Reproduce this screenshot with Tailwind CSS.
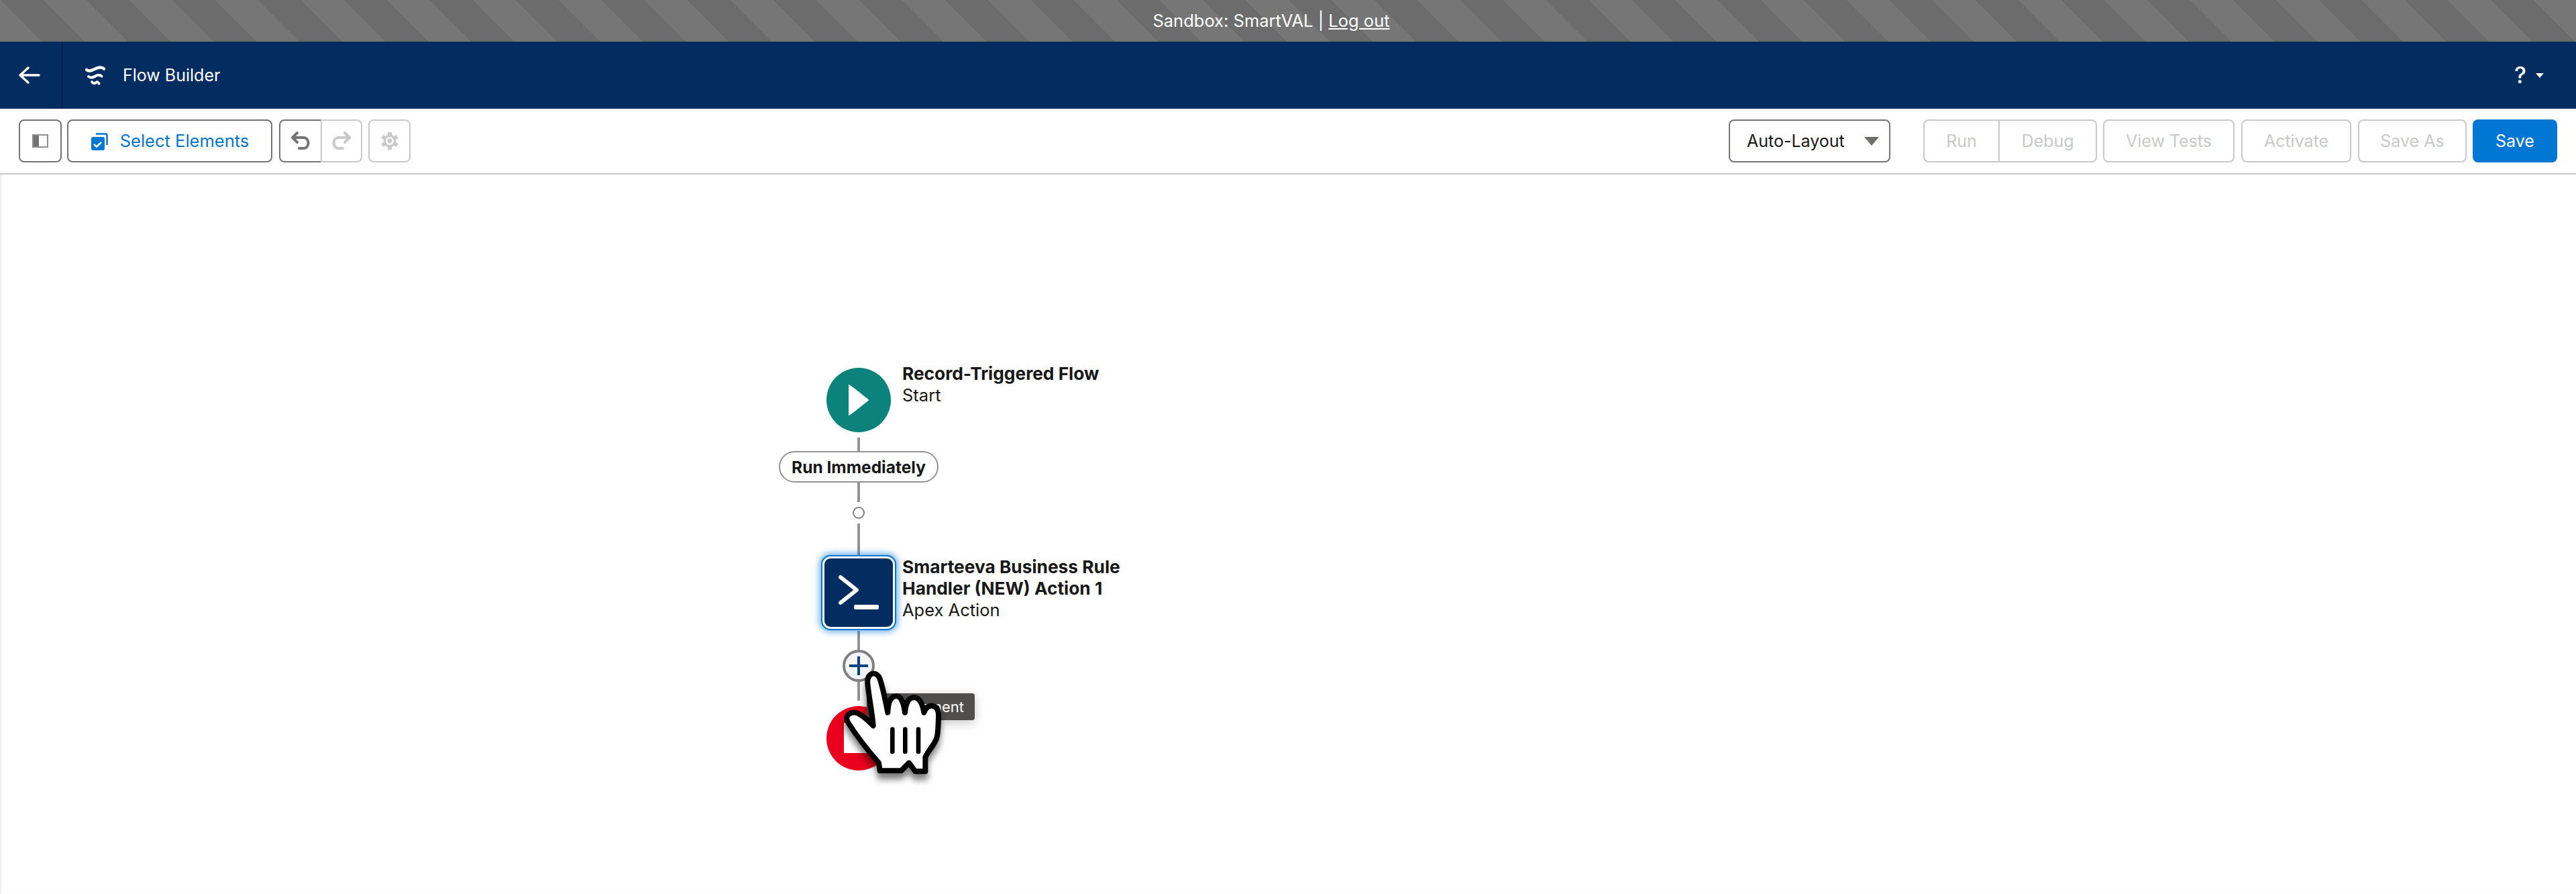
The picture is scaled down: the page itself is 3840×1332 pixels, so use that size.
<!DOCTYPE html>
<html lang="en">
<head>
  <meta charset="UTF-8" />
  <title>Flow Builder</title>
  <script src="https://cdn.jsdelivr.net/npm/@tailwindcss/browser@4"></script>
</head>
<body class="h-screen overflow-hidden flex flex-col bg-white font-[Inter,sans-serif] text-[25.500px] text-[#181818]">
  <!-- sandbox banner -->
  <div class="h-[62px] pr-[50px] flex items-center justify-center text-white text-[25.500px] bg-[linear-gradient(45deg,#6c6c6c_25%,#767676_25%,#767676_50%,#6c6c6c_50%,#6c6c6c_75%,#767676_75%)] bg-size-[128px_128px]">
    <span>Sandbox: SmartVAL |&nbsp;</span><a class="underline">Log out</a>
  </div>

  <!-- header -->
  <div class="h-[100px] flex items-center bg-[#032d60] text-white">
    <div class="w-[92px] h-full pl-[27px] flex items-center">
      <svg class="w-[34px] h-[28px]" viewBox="0 0 34 28" fill="none" stroke="white" stroke-width="3.500" stroke-linecap="round" stroke-linejoin="round"><path d="M31 14H4M15 3 3 14l12 11"/></svg>
    </div>
    <div class="w-[2px] h-full bg-[#011f45]"></div>
    <svg class="w-[30px] h-[30px] ml-[33px]" viewBox="0 0 30 30" fill="none" stroke="white" stroke-linecap="round"><path stroke-width="4.500" d="M2 7C6 10 10 8 15 5.500S24 2.500 28 5.500"/><path stroke-width="4" d="M5 17C9 20 13 18 16 16S22 14.500 24.500 16.500"/><path stroke-width="3.800" d="M10 25C12 28 14 27.500 16 26S19 25 20.500 27.500"/></svg>
    <span class="ml-[26px] mt-[2px] text-[25px]">Flow Builder</span>
    <div class="ml-auto mr-[48px] flex items-center gap-[14px]">
      <span class="text-[34px] font-medium leading-none">?</span>
      <div class="w-0 h-0 border-x-[6px] border-x-transparent border-t-[7px] border-t-white"></div>
    </div>
  </div>

  <!-- toolbar -->
  <div class="h-[98px] border-b-2 border-[#c9c9c9] px-[28px] flex items-center text-[25px]">
    <button class="w-[64px] h-[64px] flex items-center justify-center border-2 border-[#747474] rounded-lg">
      <svg class="w-[24px] h-[20px]" viewBox="0 0 24 20"><rect x="1" y="1" width="22" height="18" fill="white" stroke="#8f8f8f" stroke-width="2"/><rect x="2" y="2" width="8" height="16" fill="#747474"/></svg>
    </button>
    <button class="ml-[8px] w-[306px] h-[64px] pt-[1px] flex items-center justify-center gap-[18px] border-2 border-[#747474] rounded-lg text-[#0176d3] text-[25.500px]">
      <svg class="w-[26px] h-[26px]" viewBox="0 0 26 26"><path d="M8 1.500H22.500A2 2 0 0 1 24.500 3.500V18" fill="none" stroke="#0176d3" stroke-width="2.500"/><rect x="1" y="6" width="20" height="20" rx="3" fill="#0176d3"/><path d="M5 17l4 3.500 7-6.500" fill="none" stroke="white" stroke-width="2.500"/></svg>
      <span>Select Elements</span>
    </button>
    <div class="ml-[10px] flex">
      <button class="w-[62px] h-[64px] flex items-center justify-center border-2 border-r-0 border-[#747474] rounded-l-lg">
        <svg class="w-[30px] h-[30px]" viewBox="0 0 30 30" fill="none" stroke="#747474" stroke-width="4" stroke-linecap="round" stroke-linejoin="round"><path d="M10 3 3 10l7 7M3 10H19C29 10 29 26 19 26H13"/></svg>
      </button>
      <button class="w-[62px] h-[64px] flex items-center justify-center border-2 border-[#c9c9c9] rounded-r-lg">
        <svg class="w-[30px] h-[30px]" viewBox="0 0 30 30" fill="none" stroke="#c9c9c9" stroke-width="4" stroke-linecap="round" stroke-linejoin="round"><path d="M20 3l7 7-7 7M27 10H11C1 10 1 26 11 26H17"/></svg>
      </button>
    </div>
    <button class="ml-[9px] w-[63px] h-[64px] flex items-center justify-center border-2 border-[#c9c9c9] rounded-lg">
      <svg class="w-[28px] h-[28px]" viewBox="0 0 28 28"><g stroke="#c9c9c9" stroke-width="6"><path d="M14 1V27M2.700 7.500 25.300 20.500M2.700 20.500 25.300 7.500"/></g><circle cx="14" cy="14" r="9.500" fill="#c9c9c9"/><circle cx="14" cy="14" r="6" fill="white"/><circle cx="14" cy="14" r="3.500" fill="#c9c9c9"/></svg>
    </button>

    <button class="ml-auto w-[241px] h-[64px] pl-[25px] pr-[15px] pt-[1px] flex items-center justify-between border-2 border-[#747474] rounded-lg">
      <span>Auto-Layout</span>
      <div class="w-0 h-0 border-x-[11.500px] border-x-transparent border-t-[13px] border-t-[#706e6b]"></div>
    </button>
    <div class="ml-[49px] flex text-[#c9c9c9]">
      <button class="w-[112px] h-[64px] pt-[1px] border-2 border-r-0 border-[#c9c9c9] rounded-l-lg">Run</button>
      <button class="w-[147px] h-[64px] pt-[1px] border-2 border-[#c9c9c9] rounded-r-lg">Debug</button>
    </div>
    <button class="ml-[9px] w-[196px] h-[64px] pt-[1px] border-2 border-[#c9c9c9] rounded-lg text-[#c9c9c9]">View Tests</button>
    <button class="ml-[10px] w-[164px] h-[64px] pt-[1px] border-2 border-[#c9c9c9] rounded-lg text-[#c9c9c9]">Activate</button>
    <button class="ml-[10px] w-[162px] h-[64px] pt-[1px] border-2 border-[#c9c9c9] rounded-lg text-[#c9c9c9]">Save As</button>
    <button class="ml-[9px] w-[126px] h-[64px] pt-[1px] rounded-lg bg-[#0176d3] text-white">Save</button>
  </div>

  <!-- flow canvas -->
  <div class="relative flex-1 shadow-[inset_3px_0_3px_-1px_rgba(0,0,0,0.07)]">
    <div class="absolute left-[1278px] top-[392px] w-[4px] h-[20px] bg-[#939393]"></div>
    <div class="absolute left-[1278px] top-[459px] w-[4px] h-[29px] bg-[#939393]"></div>
    <div class="absolute left-[1278px] top-[520px] w-[4px] h-[47px] bg-[#939393]"></div>
    <div class="absolute left-[1278px] top-[680px] w-[4px] h-[28px] bg-[#939393]"></div>
    <div class="absolute left-[1278px] top-[756px] w-[4px] h-[28px] bg-[#939393]"></div>

    <!-- start node -->
    <div class="absolute left-[1232px] top-[288px] w-[96px] h-[96px] rounded-full bg-[#0b827c] flex items-center justify-center">
      <svg class="w-[96px] h-[96px]" viewBox="0 0 96 96"><path d="M34 26 62 48 34 70Z" fill="white" stroke="white" stroke-width="2" stroke-linejoin="round"/></svg>
    </div>
    <div class="absolute left-[1345px] top-[281px] leading-[32px]">
      <div class="font-bold text-[26.300px]">Record-Triggered Flow</div>
      <div>Start</div>
    </div>

    <div class="absolute left-[1161px] top-[412px] w-[238px] h-[47px] pt-[1px] rounded-full border-2 border-[#939393] bg-white flex items-center justify-center font-bold text-[24.500px]">Run Immediately</div>
    <div class="absolute left-[1271px] top-[495px] w-[18px] h-[18px] rounded-full border-2 border-[#808080] bg-white"></div>

    <!-- apex action node -->
    <div class="absolute left-[1224px] top-[567px] w-[112px] h-[112px] p-[3px] rounded-[14px] border-2 border-[#0176d3] bg-white shadow-[0_0_10px_3px_rgba(1,118,211,0.55)]">
      <div class="w-full h-full rounded-[9px] bg-[#032d60]">
        <svg class="w-full h-full" viewBox="0 0 102 102"><path d="M24 28 48 47 24 66" fill="none" stroke="white" stroke-width="6" stroke-linecap="round" stroke-linejoin="round"/><rect x="44" y="69" width="37" height="7" rx="2" fill="white"/></svg>
      </div>
    </div>
    <div class="absolute left-[1345px] top-[569px] leading-[32px]">
      <div class="font-bold text-[26.300px]">Smarteeva Business Rule<br />Handler (NEW) Action 1</div>
      <div>Apex Action</div>
    </div>

    <!-- add element -->
    <div class="absolute left-[1256px] top-[708px] w-[48px] h-[48px] rounded-full border-4 border-[#808080] bg-[#f3f5fb]">
      <svg class="w-full h-full" viewBox="0 0 40 40"><path d="M20 6V34M6 20H34" stroke="#014486" stroke-width="4"/></svg>
    </div>

    <!-- end node -->
    <div class="absolute left-[1232px] top-[792px] w-[96px] h-[96px] rounded-full bg-[#ea001e]">
      <div class="absolute left-[26px] top-[25px] w-[45px] h-[45px] bg-white"></div>
    </div>

    <div class="absolute left-[1292px] top-[773px] w-[161px] h-[40px] pr-[16px] rounded-sm bg-[#514f4d] text-white text-[22px] flex items-center justify-end whitespace-nowrap overflow-hidden shadow-[0_4px_16px_rgba(0,0,0,0.22)]">Add Element</div>

    <!-- hand cursor -->
    <svg class="absolute left-[1180px] top-[660px] w-[320px] h-[260px] drop-shadow-[0_9px_5px_rgba(0,0,0,0.5)]" viewBox="0 0 960 780">
      <path d="M365 484C360 420 345 350 340 295C335 245 380 235 395 275C410 320 420 375 430 425C432 375 445 352 468 352C490 352 500 375 507 425C512 375 525 358 548 358C572 358 585 385 592 425C600 405 612 393 630 395C650 397 658 415 657 440C656 480 656 510 650 535C640 570 610 595 598 625V688H553L525 650L490 685H395L390 650C355 610 290 530 250 465C235 435 270 415 300 430C330 445 350 470 365 484Z" fill="white" stroke="black" stroke-width="24" stroke-linejoin="round"/>
      <path d="M451 500V600M508 500V600M567 500V600" stroke="black" stroke-width="20" stroke-linecap="round"/>
    </svg>
  </div>
</body>
</html>
